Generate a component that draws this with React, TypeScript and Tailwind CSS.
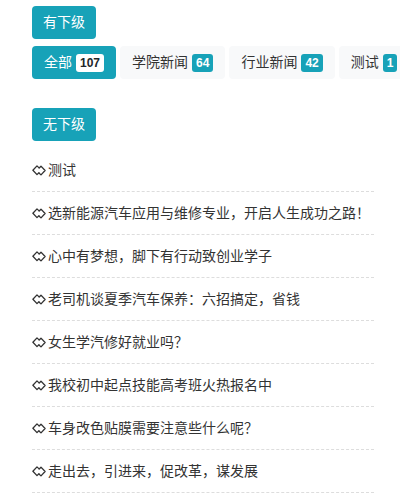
import React from "react";

type Tab = { name: string; count: number; active?: boolean };

const tabs: Tab[] = [
  { name: "全部", count: 107, active: true },
  { name: "学院新闻", count: 64 },
  { name: "行业新闻", count: 42 },
  { name: "测试", count: 1 },
];

const news = [
  "测试",
  "选新能源汽车应用与维修专业，开启人生成功之路！",
  "心中有梦想，脚下有行动致创业学子",
  "老司机谈夏季汽车保养：六招搞定，省钱",
  "女生学汽修好就业吗？",
  "我校初中起点技能高考班火热报名中",
  "车身改色贴膜需要注意些什么呢？",
  "走出去，引进来，促改革，谋发展",
];

function LinkIcon() {
  return (
    <svg width="14" height="11" viewBox="0 0 14 11" fill="none" className="shrink-0">
      <path
        d="M6.8 2.6 L5 0.9 L0.9 5.2 L5 9.6 L6.9 7.8"
        stroke="#333"
        strokeWidth="1.3"
        strokeLinejoin="round"
        strokeLinecap="round"
      />
      <path
        d="M7.2 3 L9 1.1 L13.1 5.5 L9 9.9 L7.2 8.2"
        stroke="#333"
        strokeWidth="1.3"
        strokeLinejoin="round"
        strokeLinecap="round"
      />
    </svg>
  );
}

export default function App() {
  return (
    <div
      className="min-h-[500px] bg-white pt-[6px] pl-8 text-[14px] text-[#333]"
      style={{ fontFamily: '"Liberation Sans", "Noto Sans CJK SC", sans-serif' }}
    >
      <div className="w-[342px]">
        {/* 有下级 */}
        <button className="rounded bg-[#17a2b8] px-[11px] py-[6px] leading-[21px] text-white">
          有下级
        </button>

        <div className="mt-[7px] flex gap-1 whitespace-nowrap">
          {tabs.map((t) => (
            <div
              key={t.name}
              className={
                t.active
                  ? "flex shrink-0 items-center rounded bg-[#17a2b8] px-3 py-[6px] leading-[21px] text-white"
                  : "flex shrink-0 items-center rounded bg-[#f8f9fa] px-3 py-[6px] leading-[21px] text-[#333]"
              }
            >
              {t.name}
              <span
                className={
                  t.active
                    ? "ml-1 rounded-[3px] bg-white px-[4px] py-[3px] text-[12px] leading-none font-bold text-[#212529]"
                    : "ml-1 rounded-[3px] bg-[#17a2b8] px-[4px] py-[3px] text-[12px] leading-none font-bold text-white"
                }
              >
                {t.count}
              </span>
            </div>
          ))}
        </div>

        {/* 无下级 */}
        <button className="mt-[29px] rounded bg-[#17a2b8] px-[11px] py-[6px] leading-[21px] text-white">
          无下级
        </button>

        <ul className="mt-[8px]">
          {news.map((n) => (
            <li
              key={n}
              className="flex items-center gap-[2px] border-b border-dashed border-[#ddd] pt-[11px] pb-[10px] leading-[21px]"
            >
              <LinkIcon />
              <span>{n}</span>
            </li>
          ))}
        </ul>
      </div>
    </div>
  );
}
